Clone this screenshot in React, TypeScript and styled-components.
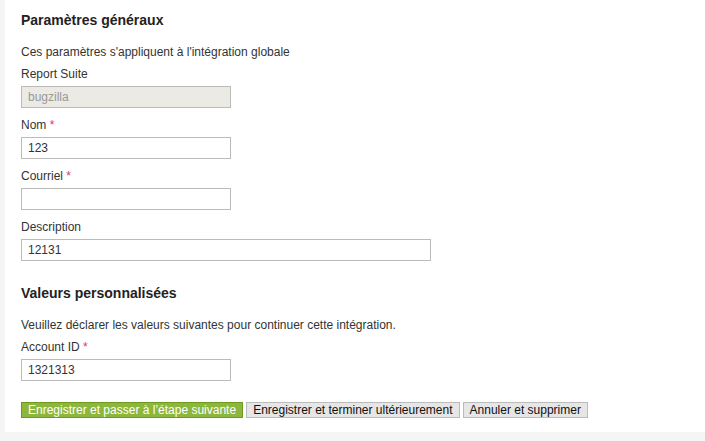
import React from "react";
import styled, { createGlobalStyle } from "styled-components";

const GlobalStyle = createGlobalStyle`
  html, body {
    margin: 0;
    padding: 0;
    background: #f5f5f5;
    font-family: "Liberation Sans", Arial, sans-serif;
    color: #333;
  }
`;

interface Field {
  label: string;
  value: string;
  required?: boolean;
  disabled?: boolean;
  wide?: boolean;
}

const general: Field[] = [
  { label: "Report Suite", value: "bugzilla", disabled: true },
  { label: "Nom", value: "123", required: true },
  { label: "Courriel", value: "", required: true },
  { label: "Description", value: "12131", wide: true },
];

const custom: Field[] = [{ label: "Account ID", value: "1321313", required: true }];

const FieldList: React.FC<{ fields: Field[] }> = ({ fields }) => (
  <>
    {fields.map((f) => (
      <FieldGroup key={f.label}>
        <Label>
          {f.label}
          {f.required && <Star> *</Star>}
        </Label>
        <Input
          $wide={f.wide}
          disabled={f.disabled}
          defaultValue={f.value}
          readOnly
        />
      </FieldGroup>
    ))}
  </>
);

const App: React.FC = () => {
  return (
    <>
      <GlobalStyle />
      <Panel>
        <Section>
          <Heading>Paramètres généraux</Heading>
          <Intro>Ces paramètres s'appliquent à l'intégration globale</Intro>
          <FieldList fields={general} />
        </Section>
        <Section>
          <Heading>Valeurs personnalisées</Heading>
          <Intro>Veuillez déclarer les valeurs suivantes pour continuer cette intégration.</Intro>
          <FieldList fields={custom} />
        </Section>
        <Actions>
          <Button $primary>Enregistrer et passer à l’étape suivante</Button>
          <Button>Enregistrer et terminer ultérieurement</Button>
          <Button>Annuler et supprimer</Button>
        </Actions>
      </Panel>
    </>
  );
};
export default App;

const Panel = styled.main`
  margin-left: 5px;
  background: #fff;
  padding: 12px 16px 14px;
  height: 406px;
`;

const Section = styled.section`
  & + & {
    margin-top: 24px;
  }
`;

const Heading = styled.h2`
  margin: 0;
  font-size: 14px;
  line-height: 16px;
  font-weight: 700;
  color: #222;
`;

const Intro = styled.p`
  margin: 17px 0 0;
  font-size: 12px;
  line-height: 14px;
`;

const FieldGroup = styled.div`
  margin-top: 8px;
  & + & {
    margin-top: 10px;
  }
`;

const Label = styled.div`
  font-size: 12px;
  line-height: 14px;
  margin-bottom: 5px;
`;

const Star = styled.span`
  color: #e8316a;
`;

const Input = styled.input<{ $wide?: boolean }>`
  display: block;
  box-sizing: border-box;
  width: ${(p) => (p.$wide ? "410px" : "210px")};
  height: 22px;
  margin: 0;
  padding: 0 6px;
  border: 1px solid #bbb;
  border-radius: 0;
  background: #fff;
  font-family: "Liberation Sans", Arial, sans-serif;
  font-size: 12px;
  color: #333;
  outline: none;

  &:disabled {
    background: #ebeae4;
    color: #999;
  }
`;

const Actions = styled.div`
  display: flex;
  gap: 3px;
  margin-top: 21px;
`;

const Button = styled.button<{ $primary?: boolean }>`
  box-sizing: border-box;
  height: 16px;
  margin: 0;
  padding: 0 6px;
  border: 1px solid ${(p) => (p.$primary ? "#6d9b20" : "#bbb")};
  border-radius: 0;
  background: ${(p) => (p.$primary ? "#8cb63c" : "#e6e6e6")};
  color: ${(p) => (p.$primary ? "#fff" : "#111")};
  font-family: "Liberation Sans", Arial, sans-serif;
  font-size: 12px;
  line-height: 14px;
  white-space: nowrap;
  cursor: pointer;
`;
